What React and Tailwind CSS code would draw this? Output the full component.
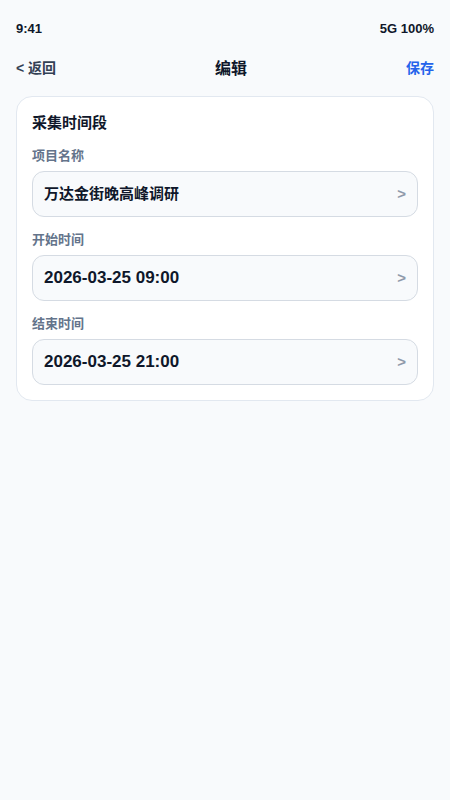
import React from "react";

const FIELDS = [
    { label: "项目名称", value: "万达金街晚高峰调研", cjk: true },
    { label: "开始时间", value: "2026-03-25 09:00" },
    { label: "结束时间", value: "2026-03-25 21:00" },
];

function Field({ label, value, cjk }) {
    return (
        <div className="flex flex-col gap-[6px]">
            <div className="text-[13px] leading-[18px] font-semibold text-[#64748b]">{label}</div>
            <div className="flex items-center justify-between h-[46px] px-[11px] rounded-[12px] border border-[#d5dbe3] bg-[#f8fafc]">
                <span className={`${cjk ? "text-[15px]" : "text-[17px]"} font-bold text-[#0f172a]`}>{value}</span>
                <span className="text-[15px] font-bold text-[#8f99aa]">&gt;</span>
            </div>
        </div>
    );
}

export default function App() {
    return (
        <div
            className="min-h-[800px] w-full bg-[#f8fafc] text-[#0f172a]"
            style={{ fontFamily: '"Liberation Sans", "Noto Sans CJK SC", sans-serif' }}
        >
            {/* Status bar */}
            <div className="flex items-center justify-between h-[57px] px-[16px] text-[13px] font-bold">
                <span>9:41</span>
                <span>5G 100%</span>
            </div>

            {/* Nav bar */}
            <div className="flex items-center justify-between h-[23px] px-[16px]">
                <span className="text-[14px] font-bold text-[#334155]">&lt; 返回</span>
                <span className="text-[16px] font-bold">编辑</span>
                <span className="text-[14px] font-bold text-[#2563eb]">保存</span>
            </div>

            {/* Card */}
            <div className="mx-[16px] mt-[16px] p-[15px] rounded-[16px] border border-[#e2e8f0] bg-white flex flex-col gap-[14px]">
                <div className="text-[15px] leading-[21px] font-bold">采集时间段</div>
                {FIELDS.map((f) => (
                    <Field key={f.label} {...f} />
                ))}
            </div>
        </div>
    );
}
